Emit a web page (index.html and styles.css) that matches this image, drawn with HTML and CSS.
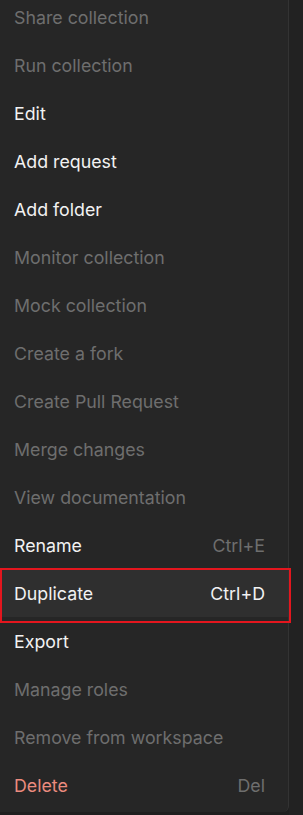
FILE: index.html
```html
<!DOCTYPE html>
<html lang="en">
<head>
    <meta charset="UTF-8">
    <meta name="viewport" content="width=device-width, initial-scale=1.0">
    <title>Collection menu</title>
    <link rel="stylesheet" href="styles.css">
</head>
<body>
    <div class="page">
        <ul class="menu">
            <li class="item disabled">Share collection</li>
            <li class="item disabled">Run collection</li>
            <li class="item">Edit</li>
            <li class="item">Add request</li>
            <li class="item">Add folder</li>
            <li class="item disabled">Monitor collection</li>
            <li class="item disabled">Mock collection</li>
            <li class="item disabled">Create a fork</li>
            <li class="item disabled">Create Pull Request</li>
            <li class="item disabled">Merge changes</li>
            <li class="item disabled">View documentation</li>
            <li class="item">Rename <span class="shortcut">Ctrl+E</span></li>
            <li class="item active">Duplicate <span class="shortcut">Ctrl+D</span></li>
            <li class="item">Export</li>
            <li class="item disabled">Manage roles</li>
            <li class="item disabled">Remove from workspace</li>
            <li class="item danger">Delete <span class="shortcut">Del</span></li>
        </ul>
        <!-- annotation box around the hovered item -->
        <div class="highlight-box"></div>
        <div class="side"></div>
    </div>
</body>
</html>
```

FILE: styles.css
```css
body {
    margin: 0;
    padding: 0;
    background-color: #1f1f1f;
    font-family: 'Inter', 'Noto Sans', sans-serif;
    overflow: hidden;
}

.page {
    position: relative;
    display: flex;
    height: 815px;
}

.menu {
    list-style: none;
    margin: -7px 0 0 0;
    padding: 0;
    width: 289px;
    height: 819px;
    background-color: #262626;
    border-right: 1px solid #333333;
    border-bottom-right-radius: 6px;
    box-sizing: border-box;
}

.item {
    display: flex;
    justify-content: space-between;
    align-items: center;
    height: 48px;
    padding: 0 23px 0 14px;
    font-size: 17.8px;
    color: #f2f2f2;
}

.item.disabled {
    color: #6e6e6e;
}

.item.danger {
    color: #eb8b7e;
}

.item.active {
    background-color: #2f2f2f;
}

.shortcut {
    color: #6e6e6e;
}

.item.active .shortcut {
    color: #f2f2f2;
}

.side {
    flex: 1;
    background-color: #222222;
}

.highlight-box {
    position: absolute;
    left: 0;
    top: 568px;
    width: 291px;
    height: 55px;
    border: 2px solid #e3161e;
    box-sizing: border-box;
}
```
